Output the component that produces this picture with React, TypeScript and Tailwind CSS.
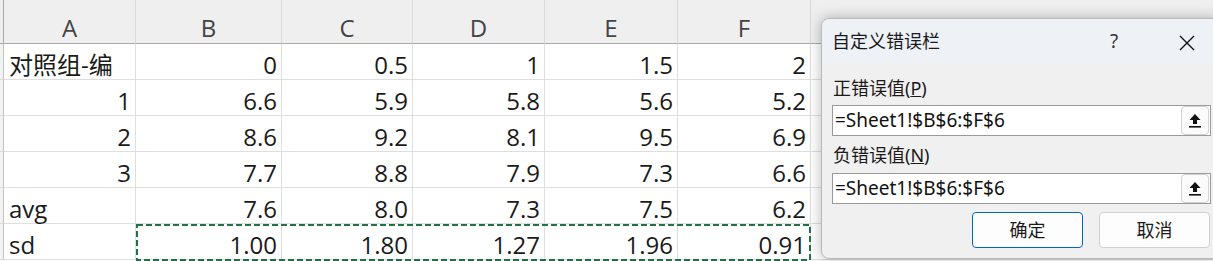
import React from 'react';

const COLS = ['A', 'B', 'C', 'D', 'E', 'F'];

const ROWS: { a: string; aRight?: boolean; vals: string[] }[] = [
  { a: '对照组-编', vals: ['0', '0.5', '1', '1.5', '2'] },
  { a: '1', aRight: true, vals: ['6.6', '5.9', '5.8', '5.6', '5.2'] },
  { a: '2', aRight: true, vals: ['8.6', '9.2', '8.1', '9.5', '6.9'] },
  { a: '3', aRight: true, vals: ['7.7', '8.8', '7.9', '7.3', '6.6'] },
  { a: 'avg', vals: ['7.6', '8.0', '7.3', '7.5', '6.2'] },
  { a: 'sd', vals: ['1.00', '1.80', '1.27', '1.96', '0.91'] },
];

const sheetFont = { fontFamily: '"Open Sans", "Noto Sans CJK SC", sans-serif' };
const uiFont = { fontFamily: '"Noto Sans", "Noto Sans CJK SC", sans-serif' };

function UploadIcon() {
  return (
    <svg width="14" height="16" viewBox="0 0 14 16">
      <path d="M7 1 L12.5 7 L9 7 L9 11 L5 11 L5 7 L1.5 7 Z" fill="#111" />
      <rect x="1" y="13" width="12" height="1.6" fill="#111" />
    </svg>
  );
}

function RefInput() {
  return (
    <div className="flex h-[31px] w-[379px] items-center border border-[#9a9a9a] bg-white">
      <span className="flex-1 pl-[2px] text-[19px] text-[#111]" style={uiFont}>=Sheet1!$B$6:$F$6</span>
      <div className="mr-[1px] flex h-[29px] w-[28px] items-center justify-center rounded-[4px] border border-[#d2d2d2] bg-[#fbfbfb]">
        <UploadIcon />
      </div>
    </div>
  );
}

function Dialog() {
  return (
    <div
      className="absolute left-[821px] top-[18px] flex h-[241px] w-[400px] flex-col overflow-hidden rounded-[8px] border border-[#b9b9b9] bg-[#f0f0f0] shadow-[0_0_14px_rgba(0,0,0,0.28)]"
      style={uiFont}
    >
      <div className="flex h-[44px] items-center bg-[#eef2f7] pl-[10px] text-[18px] text-[#1a1a1a]">
        <span className="flex-1">自定义错误栏</span>
        <span className="w-[40px] text-center text-[19px] text-[#333]">?</span>
        <span className="ml-[36px] w-[34px] text-center">
          <svg width="16" height="16" viewBox="0 0 16 16" className="inline-block">
            <path d="M1 1 L15 15 M15 1 L1 15" stroke="#111" strokeWidth="1.4" />
          </svg>
        </span>
        <span className="w-[16px]" />
      </div>
      <div className="flex flex-col pl-[10px] text-[18px] text-[#1a1a1a]">
        <div className="mt-[12px] h-[26px] leading-[26px] pl-[1px]">正错误值(<span className="underline">P</span>)</div>
        <div className="mt-[4px]">
          <RefInput />
        </div>
        <div className="mt-[6px] h-[26px] leading-[26px] pl-[1px]">负错误值(<span className="underline">N</span>)</div>
        <div className="mt-[5px]">
          <RefInput />
        </div>
        <div className="mt-[8px] flex gap-[16px] pl-[140px]">
          <button className="h-[36px] w-[111px] rounded-[4px] border border-[#0067c0] bg-[#fdfdfd] text-[18px]">确定</button>
          <button className="h-[36px] w-[111px] rounded-[4px] border border-[#d0d0d0] bg-[#fdfdfd] text-[18px]">取消</button>
        </div>
      </div>
    </div>
  );
}

export default function App() {
  return (
    <div className="relative h-[261px] w-[1213px] overflow-hidden bg-white" style={sheetFont}>
      <div className="grid grid-cols-[4px_132px_146px_131px_132px_133px_133px_1fr] grid-rows-[44px_repeat(6,36px)]">
        {/* header */}
        <div className="border-r border-b border-[#a9a9a9] bg-[#efefef]" />
        {COLS.map((c) => (
          <div
            key={c}
            className="flex items-end justify-center border-r border-b border-r-[#dadada] border-b-[#a9a9a9] bg-[#efefef] pb-[1px] text-[24px] leading-[28px] text-[#444]"
          >
            {c}
          </div>
        ))}
        <div className="border-b border-[#a9a9a9] bg-[#efefef]" />
        {ROWS.map((r, i) => (
          <React.Fragment key={i}>
            <div className="border-r border-b border-r-[#c4c4c4] border-b-[#dadada] bg-[#f2f2f2]" />
            <div
              className={`flex items-end border-r border-b border-[#dedede] text-[24px] leading-[28px] text-[#1a1a1a] ${r.aRight ? 'justify-end pr-[4px]' : 'justify-start pl-[5px]'}`}
            >
              {r.a}
            </div>
            {r.vals.map((v, j) => (
              <div
                key={j}
                className="flex items-end justify-end border-r border-b border-[#dedede] pr-[4px] text-[24px] leading-[28px] text-[#1a1a1a]"
              >
                {v}
              </div>
            ))}
            <div className="border-b border-[#dedede]" />
          </React.Fragment>
        ))}
      </div>
      {/* copy selection marquee */}
      <svg className="absolute left-[136px] top-[224px]" width="675" height="37">
        <rect x="1" y="1" width="673" height="35" fill="none" stroke="#217346" strokeWidth="2" strokeDasharray="6 3" />
      </svg>
      <Dialog />
    </div>
  );
}
